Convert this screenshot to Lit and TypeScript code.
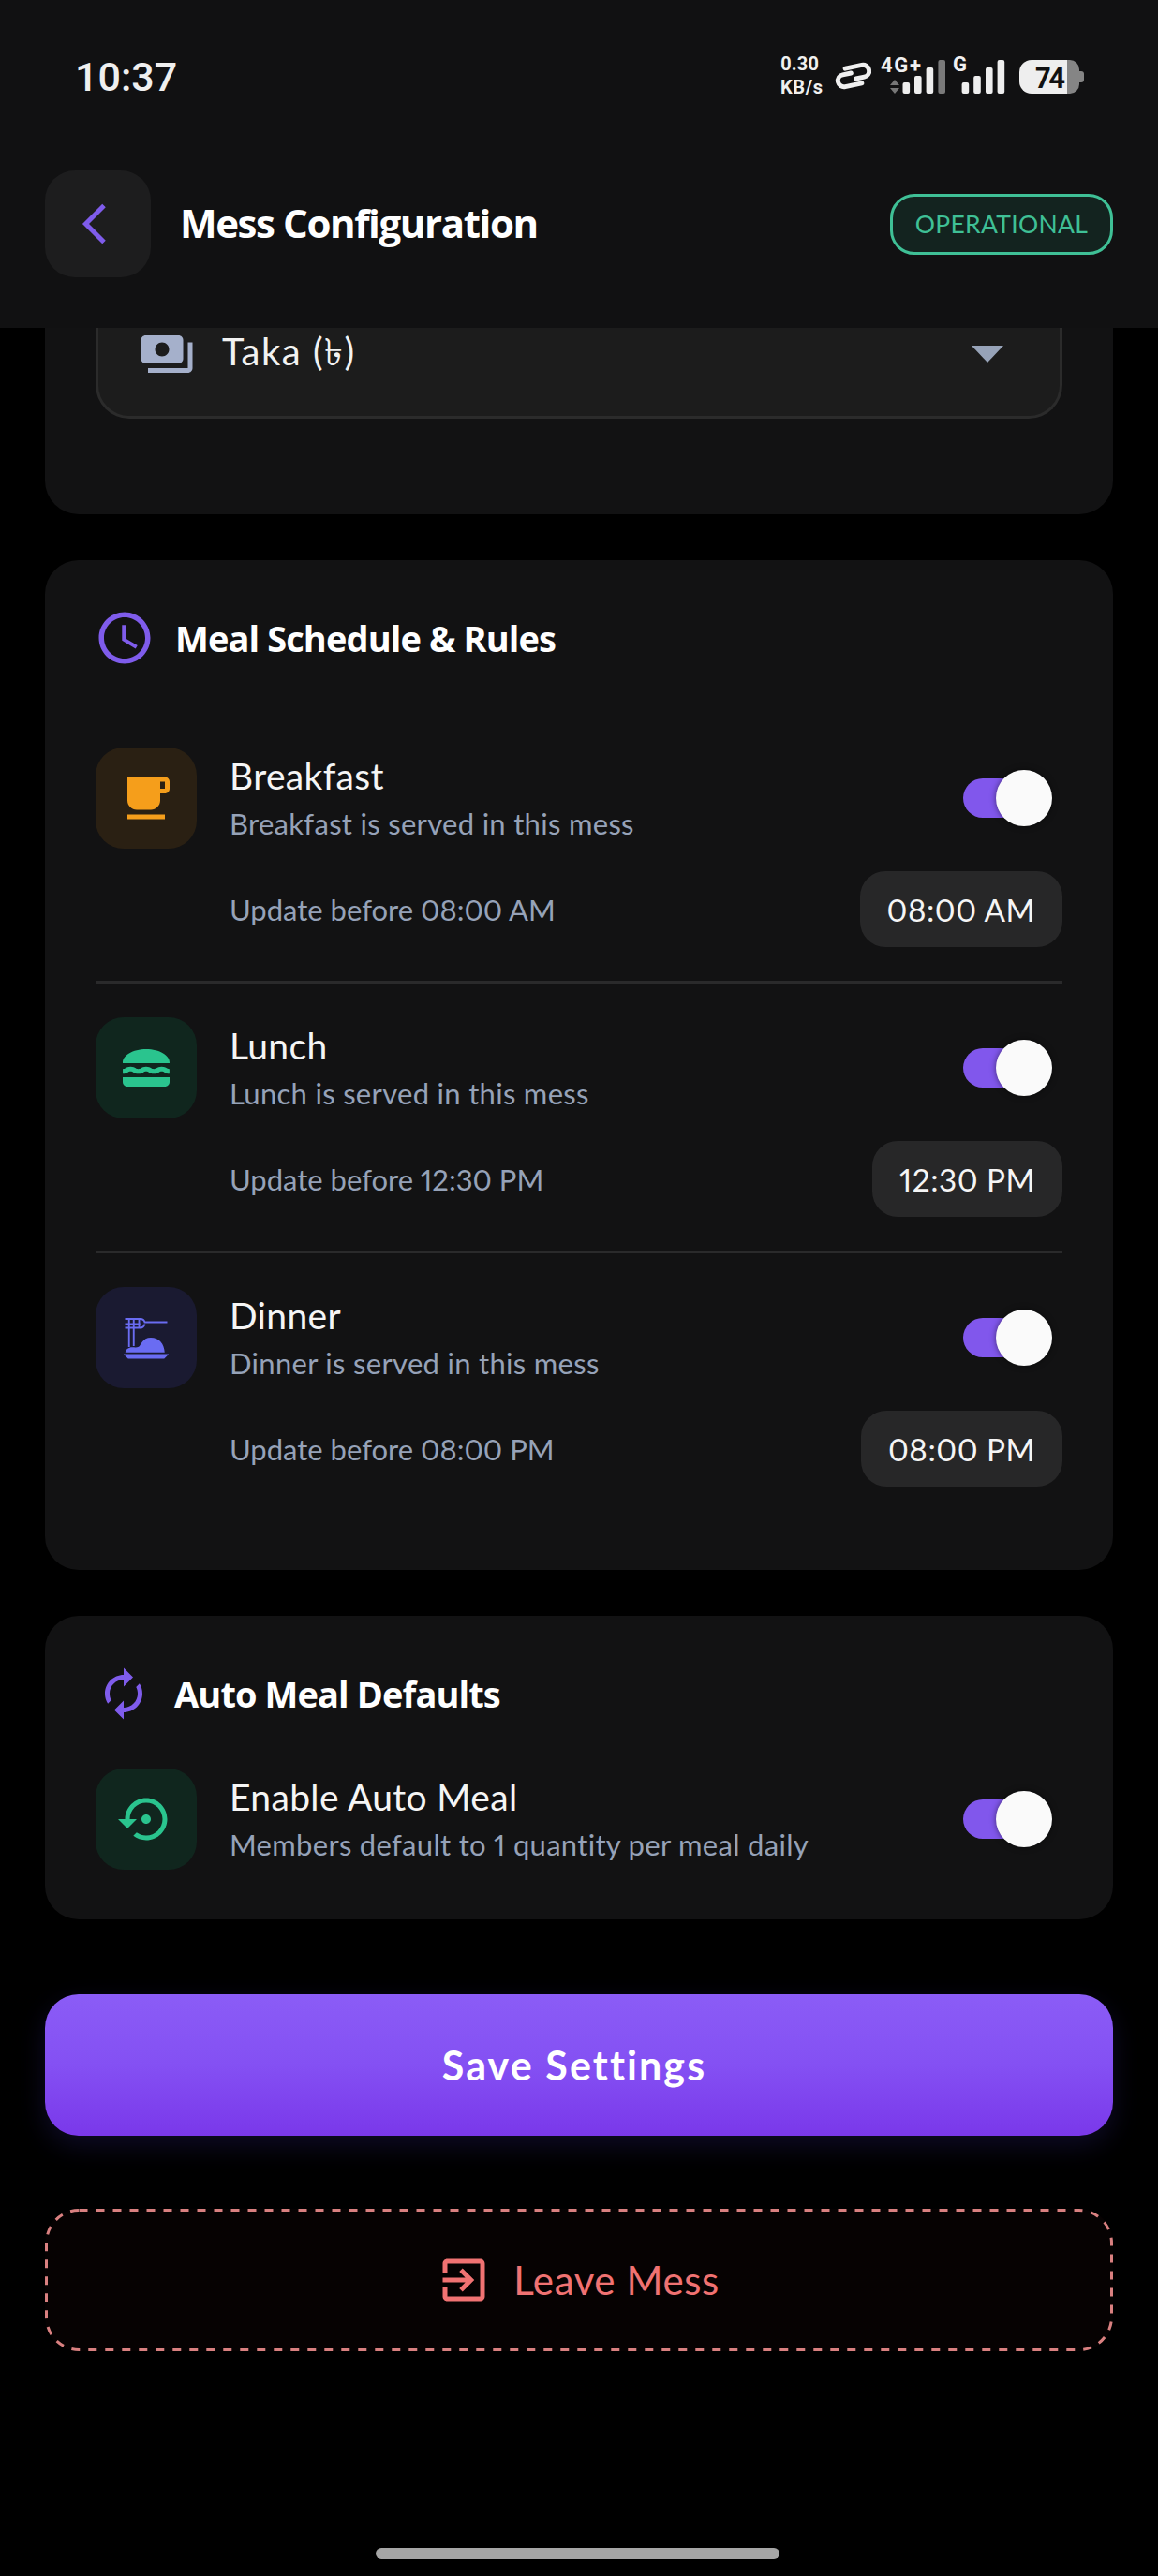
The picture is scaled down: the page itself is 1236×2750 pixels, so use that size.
import { LitElement, html, css, svg } from "lit";
import { customElement } from "lit/decorators.js";

const P = {
  payments: "M19 14V6c0-1.1-.9-2-2-2H3c-1.1 0-2 .9-2 2v8c0 1.1.9 2 2 2h14c1.1 0 2-.9 2-2zm-9-1c-1.66 0-3-1.34-3-3s1.34-3 3-3 3 1.34 3 3-1.34 3-3 3zm13-6v11c0 1.1-.9 2-2 2H4v-2h17V7h2z",
  schedule: "M11.99 2C6.47 2 2 6.48 2 12s4.47 10 9.99 10C17.52 22 22 17.52 22 12S17.52 2 11.99 2zM12 20c-4.42 0-8-3.58-8-8s3.58-8 8-8 8 3.58 8 8-3.58 8-8 8zm.5-13H11v6l5.25 3.15.75-1.23-4.5-2.67z",
  breakfast: "M20 3H4v10c0 2.21 1.79 4 4 4h6c2.21 0 4-1.79 4-4v-3h2c1.11 0 2-.9 2-2V5c0-1.11-.89-2-2-2zm0 5h-2V5h2v3zM4 19h16v2H4z",
  lunch: "M22 10c.32-3.28-4.28-6-9.99-6C6.3 4 1.7 6.72 2.02 10H22zM5.35 13.5c.55 0 .78.14 1.15.36.45.27 1.07.64 2.17.64s1.72-.37 2.17-.64c.37-.22.6-.36 1.15-.36.55 0 .78.14 1.15.36.45.27 1.07.64 2.17.64s1.72-.37 2.17-.64c.37-.22.6-.36 1.15-.36.55 0 .78.14 1.15.36.45.27 1.07.63 2.17.64v-1.98s-.79-.16-1.16-.38c-.45-.27-1.07-.64-2.17-.64s-1.72.37-2.17.64c-.37.23-.6.37-1.15.37s-.78-.14-1.15-.37c-.45-.27-1.07-.64-2.17-.64s-1.72.37-2.17.64c-.37.23-.6.37-1.15.37s-.78-.14-1.15-.37c-.45-.27-1.07-.64-2.17-.64s-1.72.37-2.17.64c-.37.23-.6.37-1.15.37v1.98c1.1 0 1.72-.37 2.17-.64.37-.22.6-.36 1.15-.36zM2 16v2c0 1.1.9 2 2 2h16c1.1 0 2-.9 2-2v-2H2z",
  autorenew: "M12 6v3l4-4-4-4v3c-4.42 0-8 3.58-8 8 0 1.57.46 3.03 1.24 4.26L6.7 14.8c-.45-.83-.7-1.79-.7-2.8 0-3.31 2.69-6 6-6zm6.76 1.74L17.3 9.2c.44.84.7 1.79.7 2.8 0 3.31-2.69 6-6 6v-3l-4 4 4 4v-3c4.42 0 8-3.58 8-8 0-1.57-.46-3.03-1.24-4.26z",
  restore: "M14 12c0-1.1-.9-2-2-2s-2 .9-2 2 .9 2 2 2 2-.9 2-2zm-2-9c-4.97 0-9 4.03-9 9H0l4 4 4-4H5c0-3.87 3.13-7 7-7s7 3.13 7 7-3.13 7-7 7c-1.51 0-2.91-.49-4.06-1.3l-1.42 1.44C8.04 20.3 9.94 21 12 21c4.97 0 9-4.03 9-9s-4.03-9-9-9z",
  exit: "M10.09 15.59L11.5 17l5-5-5-5-1.41 1.41L12.67 11H3v2h9.67l-2.58 2.59zM19 3H5c-1.11 0-2 .9-2 2v4h2V5h14v14H5v-4H3v4c0 1.1.89 2 2 2h14c1.1 0 2-.9 2-2V5c0-1.1-.9-2-2-2z",
};

const icon = (d: string, cls = "ic") =>
  html`<svg class=${cls} viewBox="0 0 24 24" fill="currentColor"><path d=${d}></path></svg>`;

const dinnerIcon = html`<svg class="ic" viewBox="0 0 24 24" fill="currentColor">
  <path d="M2.300 19h19.400l-2 2H4.300zM3.100 18.300c.3-1.300 1.400-2.200 2.900-2.200 1 0 2 .2 2.800-.2 1.100-.6 1.500-3.900 5.200-3.900 3.600 0 5.700 2.700 5.900 6.300z"></path>
  <path d="M3 4h6.500c1 0 1.600.4 1.900 1.400H21M3 6.200h6.500M3 7.800h6.500c1 0 1.600-.6 1.900-1.600M4.700 4v12M6.700 4v11.600M9 4v3.800" fill="none" stroke="currentColor" stroke-width=".75"></path>
</svg>`;

const bars = (xs: number[], lastDim: boolean) =>
  xs.map((x, i) => {
    const top = [88, 81, 72, 64][i];
    const fill = lastDim && i === 3 ? "#7a7a7a" : "#eeeeee";
    return svg`<rect x=${x} y=${top} width="7.6" height=${100 - top} rx="2" fill=${fill}></rect>`;
  });

const meals = [
  { name: "Breakfast", sub: "Breakfast is served in this mess", upd: "Update before 08:00 AM", time: "08:00 AM", tone: "amber", ic: icon(P.breakfast) },
  { name: "Lunch", sub: "Lunch is served in this mess", upd: "Update before 12:30 PM", time: "12:30 PM", tone: "green", ic: icon(P.lunch) },
  { name: "Dinner", sub: "Dinner is served in this mess", upd: "Update before 08:00 PM", time: "08:00 PM", tone: "indigo", ic: dinnerIcon },
];

@customElement("app-root")
export class AppRoot extends LitElement {
  static styles = css`
    :host { display: block; width: 1236px; height: 2750px; background: #000; overflow: hidden; color: #fff; font-family: "Lato", "Noto Sans", sans-serif; font-variant-numeric: proportional-nums; }
    * { box-sizing: border-box; }
    .head { height: 350px; background: #111112; display: flex; flex-direction: column; }
    .status { height: 164px; padding: 0 79px 0 80px; display: flex; align-items: center; justify-content: space-between; margin-bottom: 18px; }
    .clock { font: 500 43px "Roboto", sans-serif; color: #efefef; }
    .sbar { width: 324px; height: 50px; display: block; margin-top: -4px; }
    .sbar text { font-family: "Roboto", sans-serif; font-weight: 700; fill: #f0f0f0; }
    .nav { padding: 0 48px; display: flex; align-items: center; }
    .back { width: 113px; height: 114px; border-radius: 32px; background: #1d1d1e; display: flex; align-items: center; justify-content: center; color: #7f5ceb; padding-right: 10px; }
    .back svg { width: 48px; height: 48px; }
    .title { margin-left: 31px; padding-bottom: 3px; font: 700 42px "Open Sans", sans-serif; letter-spacing: -1.4px; flex: 1; }
    .pill { width: 238px; height: 65px; border: 3px solid #3fc096; border-radius: 26px; background: #13231f; color: #3fc096; font-size: 26.5px; letter-spacing: .3px; display: flex; align-items: center; justify-content: center; }
    .card { margin: 0 48px; background: #121213; border-radius: 36px; padding: 0 54px; }
    .first { height: 199px; border-radius: 0 0 36px 36px; margin-bottom: 49px; }
    .select { height: 97px; background: #1c1c1c; border: 3px solid #2b2b2b; border-top: 0; border-radius: 0 0 36px 36px; display: flex; align-items: center; padding: 0 60px 38px 43px; color: #a5b0cb; }
    .select .ic { width: 60px; height: 60px; }
    .select span { margin-left: 29px; flex: 1; color: #f2f2f2; font-size: 40px; letter-spacing: 1.5px; }
    .caret { width: 0; height: 0; border-left: 17px solid transparent; border-right: 17px solid transparent; border-top: 18px solid #97a3b8; }
    .sched { padding-top: 56px; padding-bottom: 89px; margin-bottom: 49px; }
    .h { display: flex; align-items: center; height: 54px; font: 700 38px "Open Sans", sans-serif; letter-spacing: -.9px; color: #fff; }
    .h svg { width: 60px; height: 60px; color: #7f5ceb; margin-right: 24px; flex: none; }
    .h svg.big { width: 66px; height: 66px; margin: 0 21px 0 -2px; }
    .meal-list { margin-top: 90px; display: flex; flex-direction: column; }
    .meal { display: flex; gap: 35px; }
    .meal + .meal { border-top: 3px solid #2a2a2b; margin-top: 36px; padding-top: 36px; }
    .tile { width: 108px; height: 108px; border-radius: 30px; flex: none; display: flex; align-items: center; justify-content: center; }
    .tile .ic { width: 60px; height: 60px; }
    .amber { background: #2a2013; color: #f59e1b; }
    .green { background: #10261e; color: #2ac48e; }
    .indigo { background: #1a1a31; color: #6a6cf2; }
    .body { flex: 1; min-width: 0; }
    .top { display: flex; align-items: center; height: 108px; justify-content: space-between; }
    .name { font-size: 39px; line-height: 48px; letter-spacing: .35px; color: #f5f5f5; }
    .sub { font-size: 31px; line-height: 42px; margin-top: 6px; letter-spacing: .3px; color: #96a2b8; }
    .tog { position: relative; width: 84px; height: 42px; border-radius: 21px; background: #8157ec; margin-right: 22px; flex: none; }
    .tog::after { content: ""; position: absolute; right: -11px; top: -9px; width: 60px; height: 60px; border-radius: 50%; background: #fafafa; box-shadow: 0 0 6px rgba(0,0,0,.5); }
    .bottom { display: flex; align-items: center; justify-content: space-between; margin-top: 24px; }
    .upd { font-size: 31px; letter-spacing: 0; color: #96a2b8; }
    .time { height: 81px; padding: 0 29px; border-radius: 27px; background: #272728; color: #f5f5f5; font-size: 33.3px; letter-spacing: .5px; display: flex; align-items: center; }
    .auto { padding-top: 56px; height: 324px; }
    .auto .meal { margin-top: 53px; }
    .btns { margin: 80px 48px 0; display: flex; flex-direction: column; gap: 78px; }
    .save { height: 151px; border-radius: 36px; background: linear-gradient(180deg, #8b5cf6 0%, #8450f3 50%, #7a38ea 100%); box-shadow: 0 10px 28px rgba(90,70,240,.16); display: flex; align-items: center; justify-content: center; padding-right: 10px; font-size: 43px; font-weight: 700; letter-spacing: 2.1px; color: #fff; }
    .leave { position: relative; height: 152px; border-radius: 36px; background: #060202; display: flex; align-items: center; justify-content: center; gap: 23px; padding-right: 3px; color: #f07272; font-size: 42px; letter-spacing: .6px; }
    .leave .ic { width: 60px; height: 60px; }
    .dash { position: absolute; inset: 0; width: 100%; height: 100%; }
    .home { width: 431px; height: 12px; border-radius: 6px; background: #a5a5a5; margin: 210px auto 0; position: relative; left: -2px; }
  `;

  private statusBar() {
    return html`<svg class="sbar" viewBox="833 55 324 50">
      <text x="833" y="75" font-size="20">0.30</text>
      <text x="833" y="100" font-size="20" textLength="45">KB/s</text>
      <g transform="translate(911 81) rotate(-12)" fill="none" stroke="#f0f0f0" stroke-width="5" stroke-linecap="round">
        <path d="M-7 -9.500H11a6.500 6.500 0 0 1 0 13H2"></path>
        <path d="M7 9.500H-11a6.500 6.500 0 0 1 0 -13H-2"></path>
      </g>
      <text x="940" y="77" font-size="22" textLength="43">4G+</text>
      <path d="M955 85l5 6h-10zM955 100l5-6h-10z" fill="#777"></path>
      ${bars([963.5, 976, 988.6, 1001.4], true)}
      <text x="1017" y="76" font-size="22">G</text>
      ${bars([1026.6, 1039.2, 1052, 1064.6], false)}
      <path d="M1101 64h38v36h-38a13 13 0 0 1-13-13V77a13 13 0 0 1 13-13z" fill="#eeeeee"></path>
      <path d="M1139 64h3a10 10 0 0 1 10 10v16a10 10 0 0 1-10 10h-3z" fill="#858585"></path>
      <path d="M1152 76h2a3 3 0 0 1 3 3v6a3 3 0 0 1-3 3h-2z" fill="#858585"></path>
      <text x="1105" y="94" font-size="31" style="fill:#111" textLength="32">74</text>
    </svg>`;
  }

  render() {
    return html`
      <div class="head">
        <div class="status"><span class="clock">10:37</span>${this.statusBar()}</div>
        <div class="nav">
          <div class="back"><svg viewBox="0 0 48 48" fill="none" stroke="currentColor" stroke-width="5"><path d="M35 4.500L15.500 24 35 43.500"></path></svg></div>
          <div class="title">Mess Configuration</div>
          <div class="pill">OPERATIONAL</div>
        </div>
      </div>
      <div class="card first">
        <div class="select">${icon(P.payments)}<span>Taka (৳)</span><i class="caret"></i></div>
      </div>
      <div class="card sched">
        <div class="h">${icon(P.schedule, "big")}Meal Schedule &amp; Rules</div>
        <div class="meal-list">
          ${meals.map(
            (m) => html`<div class="meal">
              <div class="tile ${m.tone}">${m.ic}</div>
              <div class="body">
                <div class="top">
                  <div><div class="name">${m.name}</div><div class="sub">${m.sub}</div></div>
                  <div class="tog"></div>
                </div>
                <div class="bottom"><span class="upd">${m.upd}</span><span class="time">${m.time}</span></div>
              </div>
            </div>`
          )}
        </div>
      </div>
      <div class="card auto">
        <div class="h">${icon(P.autorenew)}Auto Meal Defaults</div>
        <div class="meal">
          <div class="tile green">${icon(P.restore)}</div>
          <div class="body">
            <div class="top">
              <div><div class="name">Enable Auto Meal</div><div class="sub">Members default to 1 quantity per meal daily</div></div>
              <div class="tog"></div>
            </div>
          </div>
        </div>
      </div>
      <div class="btns">
        <div class="save">Save Settings</div>
        <div class="leave">
          <svg class="dash" viewBox="0 0 1140 152" fill="none"><rect x="1.500" y="1.500" width="1137" height="149" rx="35" stroke="#d98080" stroke-width="3" stroke-dasharray="9 9"></rect></svg>
          ${icon(P.exit)}<span>Leave Mess</span>
        </div>
      </div>
      <div class="home"></div>
    `;
  }
}
